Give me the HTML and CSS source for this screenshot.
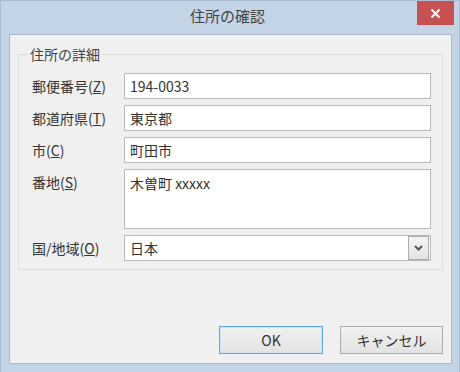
FILE: index.html
```html
<!DOCTYPE html>
<html lang="ja">
<head>
    <meta charset="UTF-8">
    <title>住所の確認</title>
    <link rel="stylesheet" href="styles.css">
</head>
<body>
    <div class="window">
        <div class="titlebar">
            <span></span>
            <span class="title">住所の確認</span>
            <button class="close" aria-label="閉じる">
                <svg width="11" height="11" viewBox="0 0 11 11">
                    <path d="M1.5 1.5 L9.5 9.5 M9.5 1.5 L1.5 9.5" stroke="#fff" stroke-width="2" fill="none" />
                </svg>
            </button>
        </div>
        <div class="client">
            <fieldset class="group">
                <legend>住所の詳細</legend>
                <div class="form">
                    <label class="caption">郵便番号(<u>Z</u>)</label>
                    <input class="textbox" type="text" value="194-0033">

                    <label class="caption">都道府県(<u>T</u>)</label>
                    <input class="textbox" type="text" value="東京都">

                    <label class="caption">市(<u>C</u>)</label>
                    <input class="textbox" type="text" value="町田市">

                    <label class="caption">番地(<u>S</u>)</label>
                    <textarea class="textbox multiline">木曽町 xxxxx</textarea>

                    <label class="caption">国/地域(<u>O</u>)</label>
                    <div class="combo">
                        <span class="combo-text">日本</span>
                        <span class="combo-button">
                            <svg width="9" height="6" viewBox="0 0 9 6">
                                <path d="M1 1 L4.5 4.5 L8 1" stroke="#555" stroke-width="2" fill="none" />
                            </svg>
                        </span>
                    </div>
                </div>
            </fieldset>
            <div class="buttons">
                <button class="btn default">OK</button>
                <button class="btn">キャンセル</button>
            </div>
        </div>
    </div>
</body>
</html>
```

FILE: styles.css
```css
* {
    box-sizing: border-box;
}

body {
    margin: 0;
    width: 460px;
    height: 372px;
    overflow: hidden;
    font-family: "Noto Sans CJK JP", "Noto Sans", sans-serif;
    font-size: 14px;
    color: #333;
}

.window {
    width: 460px;
    height: 372px;
    display: flex;
    flex-direction: column;
    background: #c3d4e7;
    border: 1px solid #aabcd0;
    border-bottom: none;
}

.titlebar {
    height: 33px;
    display: grid;
    grid-template-columns: 1fr auto 1fr;
    align-items: start;
    padding-right: 5px;
}

.title {
    font-size: 15px;
    line-height: 30px;
    color: #444;
}

.close {
    justify-self: end;
    width: 37px;
    height: 24px;
    border: none;
    padding: 0;
    background: #c75050;
    display: flex;
    align-items: center;
    justify-content: center;
}

.client {
    flex: 1;
    margin: 0 7px 8px 8px;
    background: #f0f0f0;
    border: 1px solid #a9b9cb;
    padding: 11px 8px 9px 8px;
    display: flex;
    flex-direction: column;
}

.group {
    margin: 0;
    border: 1px solid #d8dde2;
    padding: 11px 11px 8px 13px;
}

.group legend {
    margin-left: -4px;
    padding: 0 2px;
    line-height: 16px;
    color: #444;
}

.form {
    display: grid;
    grid-template-columns: 92px 1fr;
    row-gap: 6px;
}

.caption {
    line-height: 26px;
    white-space: nowrap;
}

.textbox {
    display: block;
    width: 100%;
    height: 26px;
    margin: 0;
    border: 1px solid #b7b9bd;
    background: #fff;
    padding: 0 5px;
    font: inherit;
    color: #333;
    outline: none;
}

.multiline {
    height: 60px;
    padding: 3px 5px;
    line-height: 20px;
    resize: none;
}

.combo {
    height: 26px;
    display: flex;
    align-items: stretch;
    border: 1px solid #b7b9bd;
    background: #fff;
    padding: 0 1px 0 0;
}

.combo-text {
    flex: 1;
    line-height: 24px;
    padding-left: 5px;
}

.combo-button {
    width: 21px;
    margin: 0;
    border: 1px solid #acacac;
    background: linear-gradient(#f2f2f2, #e4e4e4);
    display: flex;
    align-items: center;
    justify-content: center;
}

.buttons {
    margin-top: auto;
    display: flex;
    justify-content: flex-end;
    gap: 17px;
}

.btn {
    width: 103px;
    height: 28px;
    margin: 0;
    padding: 0;
    border: 1px solid #adadad;
    background: linear-gradient(#f0f0f0, #e3e3e3);
    font: inherit;
    color: #333;
}

.btn.default {
    width: 104px;
    border-color: #5fa8ec;
    box-shadow: inset 0 0 0 1px #cde4f7;
}
```
